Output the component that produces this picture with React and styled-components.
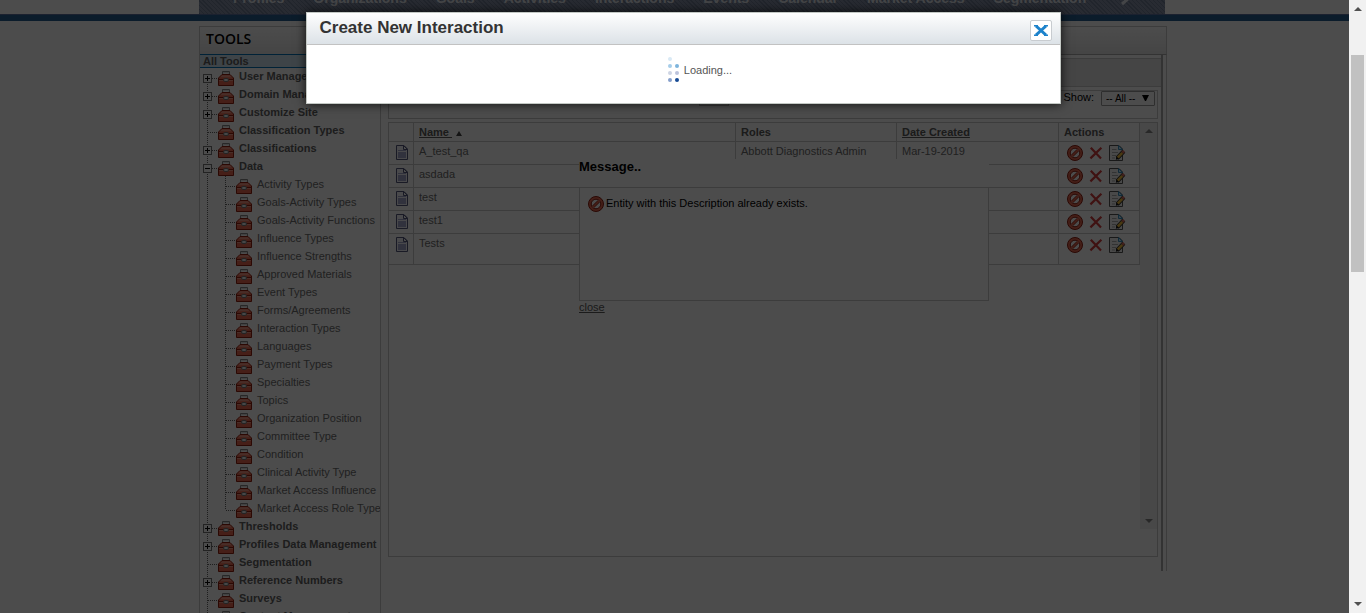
import React from "react";
import styled, { createGlobalStyle } from "styled-components";

const LINE = "#c8c8c8";

const GlobalStyle = createGlobalStyle`
  * { box-sizing: border-box; }
  body {
    margin: 0;
    background: #fff;
    color: #000;
    font: 11px/18px "Liberation Sans", Arial, sans-serif;
  }
`;

const Viewport = styled.div`
  position: relative;
  height: 100vh;
  overflow: hidden;
`;

const Container = styled.div`
  width: 968px;
  max-width: 100%;
  margin: 0 auto;
`;

const TopNav = styled.nav`
  display: flex;
  align-items: flex-end;
  gap: 29px;
  height: 14px;
  margin-right: 2px;
  padding: 0 34px 8px;
  overflow: hidden;
  background: repeating-linear-gradient(45deg, #6f7d95 0 1px, #8592a9 1px 3px);
`;

const NavLink = styled.a`
  flex: none;
  color: #e4e8ee;
  font-size: 14px;
  font-weight: bold;
  line-height: 16px;
  text-decoration: none;
`;

const NavMore = styled.svg`
  flex: none;
  width: 18px;
  height: 16px;
`;

const BlueBar = styled.div`
  height: 7px;
  border-top: 1px solid #5a6f9e;
  background: #255f92;
  margin-bottom: 5px;
`;

const Panel = styled.div`
  border-top: 1px solid ${LINE};
`;

const PanelHeader = styled.header`
  height: 27px;
  padding: 0 6px;
  border: 1px solid ${LINE};
  border-width: 0 1px;
  background: linear-gradient(#fff, #e6e6e6);
`;

const PanelTitle = styled.h1`
  margin: 0;
  font: 600 14px/24px "Open Sans", "Liberation Sans", Arial, sans-serif;
`;

const Columns = styled.div`
  display: flex;
  align-items: flex-start;
`;

const Sidebar = styled.aside`
  flex: none;
  width: 182px;
  overflow: hidden;
  border: 1px solid ${LINE};
  border-width: 0 1px;
`;

const AllTools = styled.a`
  display: block;
  height: 14px;
  padding-left: 3px;
  border: 1px solid #0074ba;
  border-width: 1px 0;
  background: #cfe3f0;
  color: #5f5f5f;
  font-weight: bold;
  line-height: 12px;
  text-decoration: none;
`;

const Tree = styled.ul`
  margin: 0;
  padding: 0;
  list-style: none;
`;

const TreeItem = styled.li`
  display: flex;
  align-items: flex-end;
  height: 18px;
`;

const TreeGlyph = styled.svg`
  flex: none;
  display: block;
  width: ${(p) => p.$w || 18}px;
  height: 18px;
`;

const TreeLink = styled.a`
  flex: none;
  align-self: flex-start;
  padding-left: 5px;
  color: ${(p) => (p.$bold ? "#626262" : "#6e6e6e")};
  font-weight: ${(p) => (p.$bold ? "bold" : "normal")};
  line-height: 17px;
  white-space: nowrap;
  text-decoration: none;
`;

const Main = styled.main`
  position: relative;
  flex: 1;
  min-width: 0;
  padding-bottom: 14px;
  border-top: 1px solid #aaa;
  border-right: 1px solid ${LINE};
`;

const MainInner = styled.div`
  margin: 0 3px -14px 0;
  padding: 3px 0 14px 7px;
  border-right: 2px solid #aaa;
`;

const Band = styled.div`
  height: 29px;
  border: 1px solid ${LINE};
  border-right: 0;
  background: #e8e8e8;
`;

const FilterBar = styled.form`
  display: flex;
  align-items: flex-start;
  justify-content: flex-end;
  height: 29px;
  margin: 3px 3px 3px 0;
  padding-right: 2px;
  border: 1px solid ${LINE};
`;

const GoButton = styled.button`
  width: 30px;
  height: 15px;
  margin-right: auto;
  margin-left: 310px;
  padding: 0;
  border: 1px solid #bbb;
  background: #eee;
  font: 10px/12px "Liberation Sans", Arial, sans-serif;
`;

const FilterLabel = styled.label`
  display: flex;
  line-height: 13px;
  gap: 7px;
`;

const SelectWrap = styled.span`
  position: relative;
  display: block;
  height: 15px;
  svg {
    position: absolute;
    right: 6px;
    top: 4px;
    width: 7px;
    height: 7px;
    pointer-events: none;
  }
`;

const Select = styled.select`
  display: block;
  appearance: none;
  width: 54px;
  height: 15px;
  padding: 0 0 0 4px;
  border: 1px solid #999;
  border-radius: 1px;
  background: #fff;
  color: #000;
  font: 10px/13px "Liberation Sans", Arial, sans-serif;
`;

const GridBox = styled.div`
  display: flex;
  align-items: flex-start;
  min-height: 435px;
  margin-right: 3px;
  border: 1px solid ${LINE};
`;

const Table = styled.table`
  flex: 1;
  width: 100%;
  table-layout: fixed;
  border-collapse: separate;
  border-spacing: 0;
  color: #6c6c6c;
`;

const Cell = styled.td`
  height: ${(p) => (p.$last ? 31 : 23)}px;
  padding: ${(p) => (p.$pad === undefined ? "1px 5px" : p.$pad)};
  border: 1px solid ${LINE};
  border-width: 0 1px 1px 0;
  line-height: 17px;
  vertical-align: top;
  white-space: nowrap;
`;

const HeadCell = styled.th`
  width: ${(p) => (p.$w ? p.$w + "px" : "auto")};
  height: 19px;
  padding: 0 5px;
  border: 1px solid ${LINE};
  border-width: 0 1px 1px 0;
  color: #5a5a5a;
  line-height: 18px;
  text-align: left;
`;

const SortLink = styled.a`
  color: inherit;
`;

const SortMark = styled.svg`
  width: 6px;
  height: 5px;
  margin-left: 4px;
`;

const Actions = styled.div`
  display: flex;
  gap: 5px;
`;

const IconButton = styled.button`
  display: block;
  width: 16px;
  height: 16px;
  padding: 0;
  border: 0;
  background: none;
`;

const GridScroll = styled.div`
  display: flex;
  flex: none;
  flex-direction: column;
  justify-content: space-between;
  align-items: center;
  width: 17px;
  height: 406px;
  padding: 6px 0;
  background: #f2f2f2;
`;

const Arrow = styled.svg`
  display: block;
  width: 8px;
  height: 4px;
`;

const Message = styled.section`
  position: absolute;
  top: 104px;
  left: 198px;
  width: 410px;
  background: #fff;
`;

const MessageTitle = styled.h2`
  height: 28px;
  margin: 0;
  font-size: 13px;
  line-height: 15px;
`;

const MessageBox = styled.div`
  display: flex;
  align-items: flex-start;
  gap: 2px;
  height: 114px;
  padding: 8px;
  border: 1px solid ${LINE};
  line-height: 15px;
`;

const MessageClose = styled.a`
  color: #5a5a5a;
  display: block;
  line-height: 12px;
`;

const Shade = styled.div`
  position: absolute;
  inset: 0;
  background: rgba(0, 0, 0, 0.7);
`;

const Dialog = styled.section`
  position: absolute;
  top: 12px;
  left: 0;
  right: 0;
  width: 755px;
  max-width: 100%;
  margin: 0 auto;
  border: 1px solid #c3c8c4;
  background: #fff;
  box-shadow: 0 0 10px rgba(0, 0, 0, 0.8);
`;

const DialogHeader = styled.header`
  display: flex;
  align-items: center;
  justify-content: space-between;
  height: 32px;
  padding: 0 8px 0 13px;
  border-bottom: 1px solid #c2c2c2;
  background: linear-gradient(#fefefe, #dce2e7);
`;

const DialogTitle = styled.h2`
  margin: 0;
  color: #333;
  font-size: 17px;
  line-height: 28px;
  height: 30px;
`;

const DialogClose = styled.button`
  display: flex;
  align-items: center;
  justify-content: center;
  width: 22px;
  height: 21px;
  margin-top: 4px;
  padding: 0;
  border: 1px solid #c8ccd0;
  border-radius: 2px;
  background: #fff;
`;

const Loading = styled.div`
  display: flex;
  align-items: center;
  justify-content: center;
  gap: 4px;
  height: 58px;
  padding: 0 0 8px 34px;
  color: #555;
`;

const PageScroll = styled.div`
  position: absolute;
  top: 0;
  right: 0;
  bottom: 0;
  display: flex;
  flex-direction: column;
  align-items: center;
  width: 17px;
  padding: 7px 0;
  background: #f1f1f1;
`;

const Thumb = styled.div`
  width: 13px;
  height: 217px;
  margin: 44px 0 auto;
  background: #c1c1c1;
`;

const Triangle = ({ up, color }) => (
  <Arrow viewBox="0 0 8 4" aria-hidden="true">
    <path d={up ? "M0 4L4 0L8 4Z" : "M0 0L4 4L8 0Z"} fill={color} />
  </Arrow>
);

const Branch = ({ open, kind, first }) => (
  <TreeGlyph viewBox="0 0 18 18" shapeRendering="crispEdges" aria-hidden="true">
    <path
      d={kind === "end" ? "M7.5 0V10" : first ? "M7.5 10V18" : "M7.5 0V18"}
      stroke="#666"
      strokeDasharray="1 1"
      fill="none"
    />
    {kind !== "line" && <path d="M8 10.5H18" stroke="#666" strokeDasharray="1 1" />}
    {kind === "box" && (
      <>
        <rect x="3.5" y="6.5" width="8" height="8" fill="#fff" stroke="#777" />
        <path d={open ? "M5 10.5H10" : "M5 10.5H10M7.5 8V13"} stroke="#000" />
      </>
    )}
  </TreeGlyph>
);

const Toolbox = () => (
  <TreeGlyph $w={16} viewBox="0 -2 16 18" aria-hidden="true">
    <path d="M4.500 4V1.500H11.500V4" fill="none" stroke="#888" strokeWidth="1" />
    <path d="M5.500 3.500V2.500H10.500V3.500" fill="none" stroke="#ddd" strokeWidth="1" />
    <path d="M4 4.500H12L15.500 8V15.500H.5V8Z" fill="#ea6a52" stroke="#92200f" />
    <path d="M4.300 5.200H11.700L13.800 7.200H2.200Z" fill="#f29a88" />
    <path d="M1 9.500H15" stroke="#92200f" />
    <path d="M1 10.500H15" stroke="#f29a88" />
    <rect x="5.500" y="8.500" width="5" height="3" rx="1.500" fill="#eee" stroke="#777" />
  </TreeGlyph>
);

const Deny = () => (
  <svg width="16" height="16" viewBox="0 0 16 16" aria-hidden="true">
    <circle cx="8" cy="8" r="7.5" fill="#e66a52" stroke="#8c1d10" />
    <circle cx="8" cy="8" r="4.8" fill="#fff" stroke="#8c1d10" />
    <path d="M5.200 10.800L10.800 5.200" stroke="#8c1d10" strokeWidth="3" />
    <path d="M4.600 11.400L11.400 4.600" stroke="#e66a52" strokeWidth="1.600" />
  </svg>
);

const Cross = () => (
  <svg width="16" height="16" viewBox="0 0 16 16" aria-hidden="true">
    <path d="M2.800 2.800L13 13.400M13.400 2.800L2.400 13.400" stroke="#d43c3c" strokeWidth="2.2" />
  </svg>
);

const EditDoc = () => (
  <svg width="17" height="16" viewBox="0 0 17 16" aria-hidden="true">
    <path d="M.5 .5H10L13.5 4V15.5H.5Z" fill="#f4f4f4" stroke="#555" />
    <path d="M9.5 .5V4.5H13.5Z" fill="#bfe4f8" stroke="#3a8fc0" />
    <path d="M3 4.5H7.5M3 7.5H9M3 10.5H7M3 13H6" stroke="#aaa" />
    <path d="M8.2 13.2L14.8 6.2" stroke="#333" strokeWidth="4.2" />
    <path d="M8.7 12.7L13.3 7.8" stroke="#f5c03c" strokeWidth="2.6" />
    <path d="M13.3 7.8L15 6" stroke="#d96b60" strokeWidth="2.8" />
    <path d="M6.8 14.8L7.4 11.6L10 14Z" fill="#111" />
  </svg>
);

const DocIcon = () => (
  <svg width="12" height="16" viewBox="0 0 12 16" display="block" aria-hidden="true">
    <path d="M.5 .5H8L11.5 4V14.5H.5Z" fill="#f4f5fb" stroke="#55587e" />
    <path d="M7.5 .5V4.5H11.5Z" fill="#fff" stroke="#55587e" />
    <path d="M2 7H10V13H2Z" fill="#a3a8cd" />
    <path d="M2 5.5H10" stroke="#a3a8cd" />
  </svg>
);

const NAV = ["Profiles", "Organizations", "Goals", "Activities", "Interactions", "Events", "Calendar", "Market Access", "Segmentation"];

const DATA_CHILDREN = [
  "Activity Types", "Goals-Activity Types", "Goals-Activity Functions", "Influence Types",
  "Influence Strengths", "Approved Materials", "Event Types", "Forms/Agreements",
  "Interaction Types", "Languages", "Payment Types", "Specialties", "Topics",
  "Organization Position", "Committee Type", "Condition", "Clinical Activity Type",
  "Market Access Influence", "Market Access Role Type",
];

const TREE = [
  { label: "User Management", box: true },
  { label: "Domain Management", box: true },
  { label: "Customize Site", box: true },
  { label: "Classification Types" },
  { label: "Classifications", box: true },
  { label: "Data", box: true, children: DATA_CHILDREN },
  { label: "Thresholds", box: true },
  { label: "Profiles Data Management", box: true },
  { label: "Segmentation" },
  { label: "Reference Numbers", box: true },
  { label: "Surveys" },
  { label: "Content Management" },
];

const ROWS = [
  { name: "A_test_qa", roles: "Abbott Diagnostics Admin", date: "Mar-19-2019" },
  { name: "asdada" },
  { name: "test" },
  { name: "test1" },
  { name: "Tests" },
];

const DOTS = [
  [2, 2, "#d9e9f5"], [2, 9, "#a6cde9"], [9, 9, "#7db4dc"], [2, 16, "#ced5e4"],
  [9, 16, "#bcc3dc"], [2, 23, "#869fcb"], [9, 23, "#164a94"],
];

function ToolTree() {
  return (
    <Tree>
      {TREE.map((node, i) => (
        <React.Fragment key={node.label}>
          <TreeItem>
            <Branch kind={node.box ? "box" : "tee"} open={!!node.children} first={i === 0} />
            <Toolbox />
            <TreeLink href="#" $bold>{node.label}</TreeLink>
          </TreeItem>
          {(node.children || []).map((child, n) => (
            <TreeItem key={child}>
              <Branch kind="line" />
              <Branch kind={n === node.children.length - 1 ? "end" : "tee"} />
              <Toolbox />
              <TreeLink href="#">{child}</TreeLink>
            </TreeItem>
          ))}
        </React.Fragment>
      ))}
    </Tree>
  );
}

function RecordTable() {
  return (
    <Table>
      <thead>
        <tr>
          <HeadCell $w={25} />
          <HeadCell>
            <SortLink href="#">Name&nbsp;</SortLink>
            <SortMark viewBox="0 0 6 5" aria-hidden="true"><path d="M0 5L3 0L6 5Z" fill="#444" /></SortMark>
          </HeadCell>
          <HeadCell $w={161}>Roles</HeadCell>
          <HeadCell $w={162}><SortLink href="#">Date Created</SortLink></HeadCell>
          <HeadCell $w={81}>Actions</HeadCell>
        </tr>
      </thead>
      <tbody>
        {ROWS.map((row, i) => {
          const last = i === ROWS.length - 1;
          return (
            <tr key={row.name}>
              <Cell $last={last} $pad="3px 0 0 7px"><DocIcon /></Cell>
              <Cell $last={last}>{row.name}</Cell>
              <Cell $last={last}>{row.roles}</Cell>
              <Cell $last={last}>{row.date}</Cell>
              <Cell $last={last} $pad="3px 0 0 8px">
                <Actions>
                  <IconButton type="button" aria-label="Deny"><Deny /></IconButton>
                  <IconButton type="button" aria-label="Delete"><Cross /></IconButton>
                  <IconButton type="button" aria-label="Edit"><EditDoc /></IconButton>
                </Actions>
              </Cell>
            </tr>
          );
        })}
      </tbody>
    </Table>
  );
}

export default function App() {
  return (
    <Viewport>
      <GlobalStyle />
      <Container>
        <TopNav>
          {NAV.map((label) => <NavLink href="#" key={label}>{label}</NavLink>)}
          <NavMore viewBox="0 0 18 16" aria-hidden="true">
            <path d="M8 2L14 8L7 14" fill="none" stroke="#e4e8ee" strokeWidth="3" />
          </NavMore>
        </TopNav>
      </Container>
      <BlueBar />
      <Container>
        <Panel>
          <PanelHeader><PanelTitle>TOOLS</PanelTitle></PanelHeader>
          <Columns>
            <Sidebar>
              <AllTools href="#">All Tools</AllTools>
              <ToolTree />
            </Sidebar>
            <Main>
              <MainInner>
                <Band />
                <FilterBar>
                  <GoButton type="button">Go</GoButton>
                  <FilterLabel>
                    Show:
                    <SelectWrap>
                      <Select defaultValue="all"><option value="all">-- All --</option></Select>
                      <svg viewBox="0 0 7 7" aria-hidden="true"><path d="M0 0H7L4 6H3Z" fill="#000" /></svg>
                    </SelectWrap>
                  </FilterLabel>
                </FilterBar>
                <GridBox>
                  <RecordTable />
                  <GridScroll>
                    <Triangle up color="#888" />
                    <Triangle color="#888" />
                  </GridScroll>
                </GridBox>
              </MainInner>
              <Message>
                <MessageTitle>Message..</MessageTitle>
                <MessageBox><Deny />Entity with this Description already exists.</MessageBox>
                <MessageClose href="#">close</MessageClose>
              </Message>
            </Main>
          </Columns>
        </Panel>
      </Container>
      <Shade />
      <Dialog role="dialog" aria-label="Create New Interaction">
        <DialogHeader>
          <DialogTitle>Create New Interaction</DialogTitle>
          <DialogClose type="button" aria-label="Close">
            <svg width="14" height="11" viewBox="0 0 14 11" aria-hidden="true">
              <path d="M2 1L12 10M12 1L2 10" stroke="#1c82cb" strokeWidth="3" />
              <path d="M0 0H4V1.500H0ZM10 0H14V1.500H10ZM0 9.500H4V11H0ZM10 9.500H14V11H10Z" fill="#1c82cb" />
            </svg>
          </DialogClose>
        </DialogHeader>
        <Loading>
          <svg width="12" height="26" viewBox="0 0 12 26" aria-hidden="true">
            {DOTS.map(([x, y, fill]) => <circle key={x + "-" + y} cx={x} cy={y} r="2" fill={fill} />)}
          </svg>
          Loading...
        </Loading>
      </Dialog>
      <PageScroll>
        <Triangle up color="#505050" />
        <Thumb />
        <Triangle color="#505050" />
      </PageScroll>
    </Viewport>
  );
}
